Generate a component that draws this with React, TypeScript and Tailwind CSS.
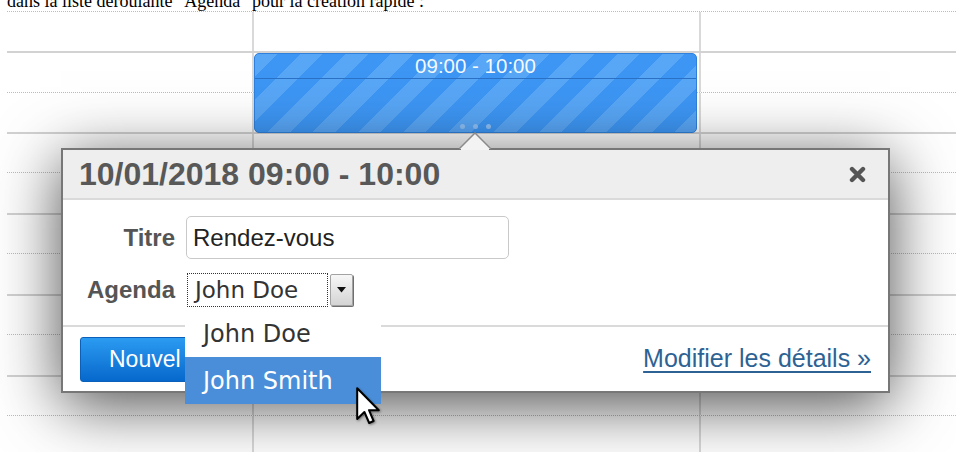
import React from 'react';

// half-hour lines of the day view: dotted on :30, solid on the hour
const gridRows = [
    { line: 'dotted', h: 'h-[40px]' },
    { line: 'solid', h: 'h-[41px]' },
    { line: 'dotted', h: 'h-[40px]' },
    { line: 'solid', h: 'h-[40px]' },
    { line: 'dotted', h: 'h-[41px]' },
    { line: 'solid', h: 'h-[40px]' },
    { line: 'dotted', h: 'h-[41px]' },
    { line: 'solid', h: 'h-[40px]' },
    { line: 'dotted', h: 'h-[41px]' },
    { line: 'solid', h: 'h-[40px]' },
    { line: 'dotted', h: 'h-[40px]' },
];

const sans = "font-['Liberation_Sans',Arial,sans-serif]";
const dejavu = "font-['DejaVu_Sans',sans-serif]";

function GridRow({ line, h }: { line: string; h: string }) {
    const border = line === 'solid'
        ? 'border-t-2 border-[#d2d2d2]'
        : 'border-t border-dotted border-[#bcbcbc]';
    return (
        <div className={`flex ${h} ${border}`}>
            <div className="w-[245px] shrink-0" />
            <div className="w-[447px] shrink-0 border-l-2 border-[#d9d9d9]" />
            <div className="flex-1 border-l-2 border-[#d9d9d9]" />
        </div>
    );
}

function CloseIcon() {
    return (
        <svg width="17" height="17" viewBox="0 0 17 17">
            <path d="M3 3 L14 14 M14 3 L3 14" stroke="#555" strokeWidth="4.4" strokeLinecap="round" />
        </svg>
    );
}

function EventBlock() {
    return (
        <div className="absolute left-[254px] top-[53px] w-[443px] h-[80px] rounded-[5px] border border-[#2f80dc] overflow-hidden bg-[#3d96f4] bg-[image:repeating-linear-gradient(135deg,#58a6f6_0px,#58a6f6_16px,#3d96f4_16px,#3d96f4_32px)] flex flex-col">
            <div className={`h-[25px] shrink-0 border-b border-[#2b72c6] flex items-center justify-center text-[20.5px] leading-none text-white/95 ${sans}`}>
                09:00 - 10:00
            </div>
            <div className="flex-1 flex items-end justify-center gap-[8px] pb-[3px]">
                <span className="w-[5px] h-[5px] rounded-full bg-[#8ec0f6]" />
                <span className="w-[5px] h-[5px] rounded-full bg-[#8ec0f6]" />
                <span className="w-[5px] h-[5px] rounded-full bg-[#8ec0f6]" />
            </div>
        </div>
    );
}

function QuickCreatePopup() {
    return (
        <div className="absolute left-[61px] top-[148px] w-[829px] h-[245px] bg-white border-2 border-[#777] shadow-[0_12px_60px_rgba(0,0,0,0.7)] flex flex-col">
            {/* header */}
            <div className="h-[50px] shrink-0 bg-[#eeeeee] border-b-2 border-[#dadada] flex items-center justify-between pl-[16px] pr-[22px]">
                <h2 className={`text-[32px] leading-none font-bold text-[#585858] ${sans}`}>
                    10/01/2018 09:00 - 10:00
                </h2>
                <CloseIcon />
            </div>

            {/* form */}
            <div className="h-[125px] shrink-0 pt-[16px] flex flex-col gap-[14px]">
                <div className="flex items-center gap-[11px]">
                    <label className={`w-[112px] text-right text-[24px] font-bold text-[#555] ${sans}`}>Titre</label>
                    <input
                        readOnly
                        value="Rendez-vous"
                        className={`w-[323px] h-[43px] border border-[#c9c9c9] rounded-[5px] px-[6px] text-[24px] text-[#222] outline-none ${sans}`}
                    />
                </div>
                <div className="flex items-center gap-[12px] h-[34px]">
                    <label className={`w-[112px] text-right text-[24px] font-bold text-[#555] ${sans}`}>Agenda</label>
                    <div className="flex items-center h-[34px]">
                        <div className={`w-[141px] h-[34px] border border-dotted border-[#333] flex items-center pl-[7px] text-[23px] text-[#333] ${dejavu}`}>
                            John Doe
                        </div>
                        <div className="ml-[2px] w-[23px] h-[32px] border border-[#a3a3a3] rounded-[2px] bg-linear-to-b from-[#f7f7f7] to-[#d4d4d4] shadow-[1px_1px_0_#6f6f6f] flex items-center justify-center">
                            <svg width="9" height="6" viewBox="0 0 9 6">
                                <path d="M0 0 H9 L4.5 5.5 Z" fill="#111" />
                            </svg>
                        </div>
                    </div>
                </div>
            </div>

            {/* footer */}
            <div className="flex-1 border-t-2 border-[#dadada] flex items-center justify-between px-[17px]">
                <button className={`h-[45px] rounded-[3px] border border-[#0b60b9] bg-linear-to-b from-[#2b9bf1] to-[#0668cc] pl-[28px] pr-[28px] text-[23px] text-white ${sans}`}>
                    Nouvel événement
                </button>
                <a href="#" className={`text-[25px] text-[#2d6394] underline underline-offset-[4px] ${sans}`}>
                    Modifier les détails »
                </a>
            </div>
        </div>
    );
}

function AgendaOptions() {
    return (
        <div className={`absolute left-[185px] top-[310px] w-[196px] bg-white flex flex-col text-[24px] ${dejavu}`}>
            <div className="h-[47px] flex items-center pl-[18px] text-[#333]">John Doe</div>
            <div className="h-[47px] flex items-center pl-[18px] bg-[#4a8ed9] text-white">John Smith</div>
        </div>
    );
}

function MouseArrow() {
    return (
        <svg width="24" height="38" viewBox="0 0 12 19" className="absolute left-[356px] top-[387px] drop-shadow-[1px_1px_1px_rgba(0,0,0,0.4)]">
            <path
                d="M0.6 0.6 L0.6 16 L4.2 12.5 L6.6 18 L8.8 17 L6.5 11.6 L11.4 11.6 Z"
                fill="#fff"
                stroke="#000"
                strokeWidth="1"
                strokeLinejoin="round"
            />
        </svg>
    );
}

export default function App() {
    return (
        <div className="relative w-[956px] h-[452px] overflow-hidden bg-white">
            <div className="h-[11px] overflow-hidden">
                <p className="-mt-[8px] pl-[7px] text-[18px] leading-[18px] text-black font-['Liberation_Serif','Times_New_Roman',serif] whitespace-nowrap">
                    dans la liste déroulante "Agenda" pour la création rapide :
                </p>
            </div>
            <div className="ml-[7px]">
                {gridRows.map((r, i) => (
                    <GridRow key={i} line={r.line} h={r.h} />
                ))}
            </div>

            <EventBlock />

            <QuickCreatePopup />

            {/* pointer from the popup to the event */}
            <svg width="32" height="18" viewBox="0 0 32 18" className="absolute left-[459px] top-[132px]">
                <path d="M0 17 L16 1 L32 17" fill="#f3f3f3" stroke="#8a8a8a" strokeWidth="1.5" />
                <rect x="2" y="16.2" width="28" height="2" fill="#f3f3f3" />
            </svg>

            <AgendaOptions />
            <MouseArrow />
        </div>
    );
}
